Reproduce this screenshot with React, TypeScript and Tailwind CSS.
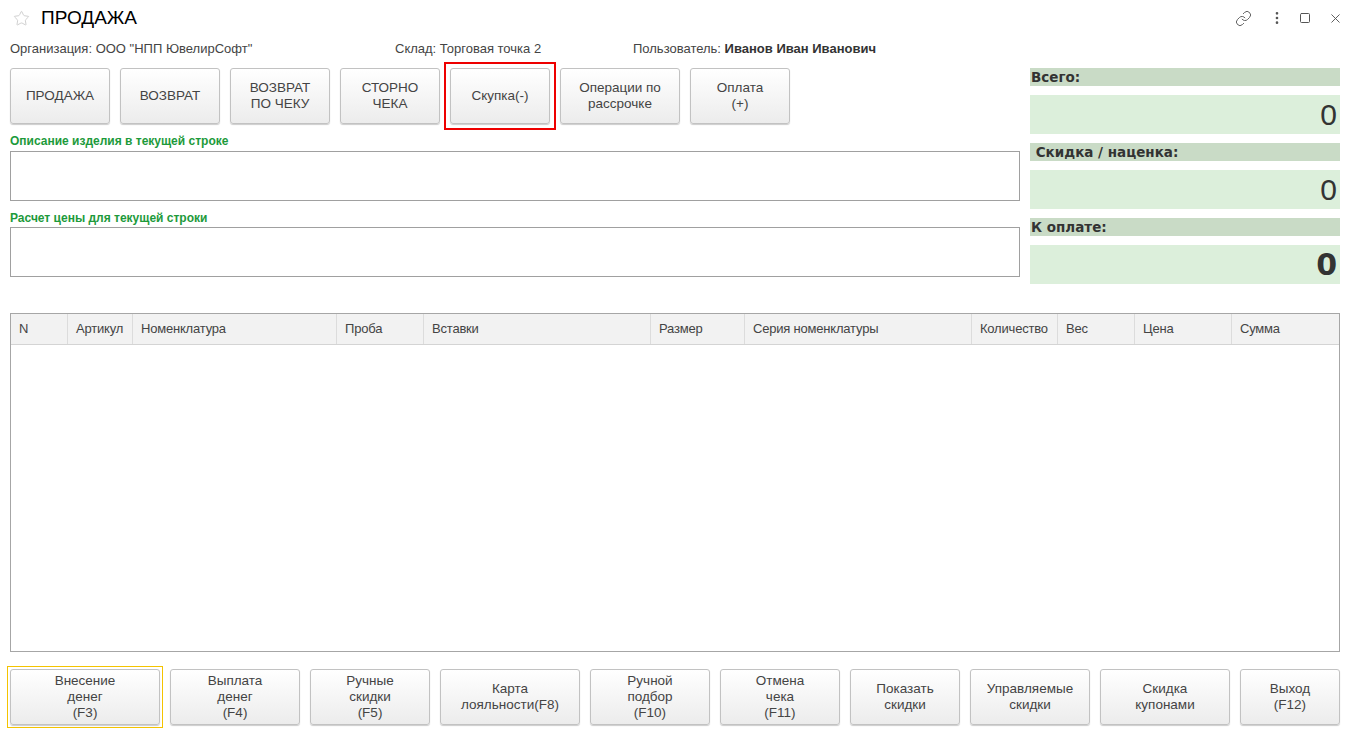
import { Star, Link, EllipsisVertical, Square, X } from "lucide-react";

const font = "font-['Liberation_Sans',Arial,sans-serif]";

const topButtons = [
  { label: ["ПРОДАЖА"], w: "w-[100px]" },
  { label: ["ВОЗВРАТ"], w: "w-[100px]" },
  { label: ["ВОЗВРАТ", "ПО ЧЕКУ"], w: "w-[100px]" },
  { label: ["СТОРНО", "ЧЕКА"], w: "w-[100px]" },
  { label: ["Скупка(-)"], w: "w-[100px]", active: true },
  { label: ["Операции по", "рассрочке"], w: "w-[120px]" },
  { label: ["Оплата", "(+)"], w: "w-[100px]" },
];

const bottomButtons = [
  { label: ["Внесение", "денег", "(F3)"], w: "w-[150px]", focus: true },
  { label: ["Выплата", "денег", "(F4)"], w: "w-[130px]" },
  { label: ["Ручные", "скидки", "(F5)"], w: "w-[120px]" },
  { label: ["Карта", "лояльности(F8)"], w: "w-[140px]" },
  { label: ["Ручной", "подбор", "(F10)"], w: "w-[120px]" },
  { label: ["Отмена", "чека", "(F11)"], w: "w-[120px]" },
  { label: ["Показать", "скидки"], w: "w-[110px]" },
  { label: ["Управляемые", "скидки"], w: "w-[120px]" },
  { label: ["Скидка", "купонами"], w: "w-[130px]" },
  { label: ["Выход", "(F12)"], w: "w-[100px]" },
];

const columns = [
  { name: "N", w: "w-[57px]" },
  { name: "Артикул", w: "w-[65px]" },
  { name: "Номенклатура", w: "w-[204px]" },
  { name: "Проба", w: "w-[87px]" },
  { name: "Вставки", w: "w-[227px]" },
  { name: "Размер", w: "w-[94px]" },
  { name: "Серия номенклатуры", w: "w-[227px]" },
  { name: "Количество", w: "w-[86px]" },
  { name: "Вес", w: "w-[77px]" },
  { name: "Цена", w: "w-[97px]" },
  { name: "Сумма", w: "flex-1" },
];

function Btn({
  label,
  w,
  active,
  focus,
}: {
  label: string[];
  w: string;
  active?: boolean;
  focus?: boolean;
}) {
  const btn = (
    <button
      className={`${w} h-[56px] shrink-0 flex flex-col items-center justify-center rounded-[3px] border border-[#c2c2c2] bg-gradient-to-b from-white to-[#ececec] shadow-[0_1px_1px_rgba(0,0,0,0.2)] text-[13.5px] leading-[16px] text-[#444]`}
    >
      {label.map((l) => (
        <span key={l}>{l}</span>
      ))}
    </button>
  );
  // selection frames: square, drawn round the button
  if (active) return <div className="-m-[6px] p-[4px] border-2 border-[#ee0000] flex">{btn}</div>;
  if (focus) return <div className="-m-[3px] p-[2px] border border-[#f4c300] flex">{btn}</div>;
  return btn;
}

function Total({ title, value, bold }: { title: string; value: string; bold?: boolean }) {
  return (
    <div className="flex flex-col">
      <div className="h-[18px] bg-[#c9dbc6] pl-[1px] flex items-center whitespace-pre font-['DejaVu_Sans',Verdana,sans-serif] font-bold text-[13.5px] text-[#333]">
        {title}
      </div>
      <div
        className={`mt-[9px] h-[39px] bg-[#dcefdb] flex items-center justify-end pr-[3px] text-[30px] text-[#333] ${
          bold ? "font-bold font-['DejaVu_Sans',Verdana,sans-serif] text-[28px]" : ""
        }`}
      >
        {value}
      </div>
    </div>
  );
}

export default function App() {
  return (
    <div className={`${font} w-[1355px] h-[734px] bg-white text-[#333] overflow-hidden`}>
      {/* title bar */}
      <div className="h-[36px] flex items-center pl-[13px] pr-[12px]">
        <Star className="w-[17px] h-[17px] text-[#c8c8c8]" strokeWidth={1.2} />
        <span className="ml-[11px] text-[19px] text-black">ПРОДАЖА</span>
        <div className="ml-auto flex items-center text-[#555]">
          <Link className="w-[17px] h-[17px]" strokeWidth={1.3} />
          <EllipsisVertical className="ml-[17px] w-[16px] h-[16px]" strokeWidth={2} />
          <Square className="ml-[14px] w-[12px] h-[12px]" strokeWidth={2} />
          <X className="ml-[17px] w-[15px] h-[15px]" strokeWidth={1.5} />
        </div>
      </div>

      {/* info row */}
      <div className="flex items-center h-[22px] mt-[2px] pl-[10px] text-[13px] text-[#444]">
        <span className="w-[385px]">Организация: ООО "НПП ЮвелирСофт"</span>
        <span className="w-[238px]">Склад: Торговая точка 2</span>
        <span>
          Пользователь: <b className="text-[#333]">Иванов Иван Иванович</b>
        </span>
      </div>

      {/* main */}
      <div className="flex gap-[10px] px-[10px] mt-[8px]">
        <div className="w-[1010px] flex flex-col">
          <div className="flex gap-[10px]">
            {topButtons.map((b) => (
              <Btn key={b.label.join()} {...b} />
            ))}
          </div>
          <div className="mt-[9px] h-[18px] leading-[16px] text-[12px] font-bold text-[#1d9a3b]">
            Описание изделия в текущей строке
          </div>
          <div className="h-[50px] border border-[#a0a0a0]"></div>
          <div className="mt-[10px] h-[16px] leading-[14px] text-[12px] font-bold text-[#1d9a3b]">
            Расчет цены для текущей строки
          </div>
          <div className="h-[50px] border border-[#a0a0a0]"></div>
        </div>
        <div className="w-[310px] flex flex-col gap-[9px]">
          <Total title="Всего:" value="0" />
          <Total title=" Скидка / наценка:" value="0" />
          <Total title="К оплате:" value="0" bold />
        </div>
      </div>

      {/* table */}
      <div className="ml-[10px] w-[1330px] mt-[29px] h-[339px] border border-[#a6a6a6] flex flex-col">
        <div className="h-[31px] flex bg-[#f2f2f2] border-b border-[#d4d4d4]">
          {columns.map((c, i) => (
            <div
              key={c.name}
              className={`${c.w} flex items-center px-[8px] text-[13px] text-[#444] tracking-[-0.2px] ${
                i < columns.length - 1 ? "border-r border-[#dcdcdc]" : ""
              }`}
            >
              {c.name}
            </div>
          ))}
        </div>
        <div className="flex-1 bg-white"></div>
      </div>

      {/* bottom buttons */}
      <div className="flex gap-[10px] px-[10px] mt-[17px]">
        {bottomButtons.map((b) => (
          <Btn key={b.label.join()} {...b} />
        ))}
      </div>
    </div>
  );
}
